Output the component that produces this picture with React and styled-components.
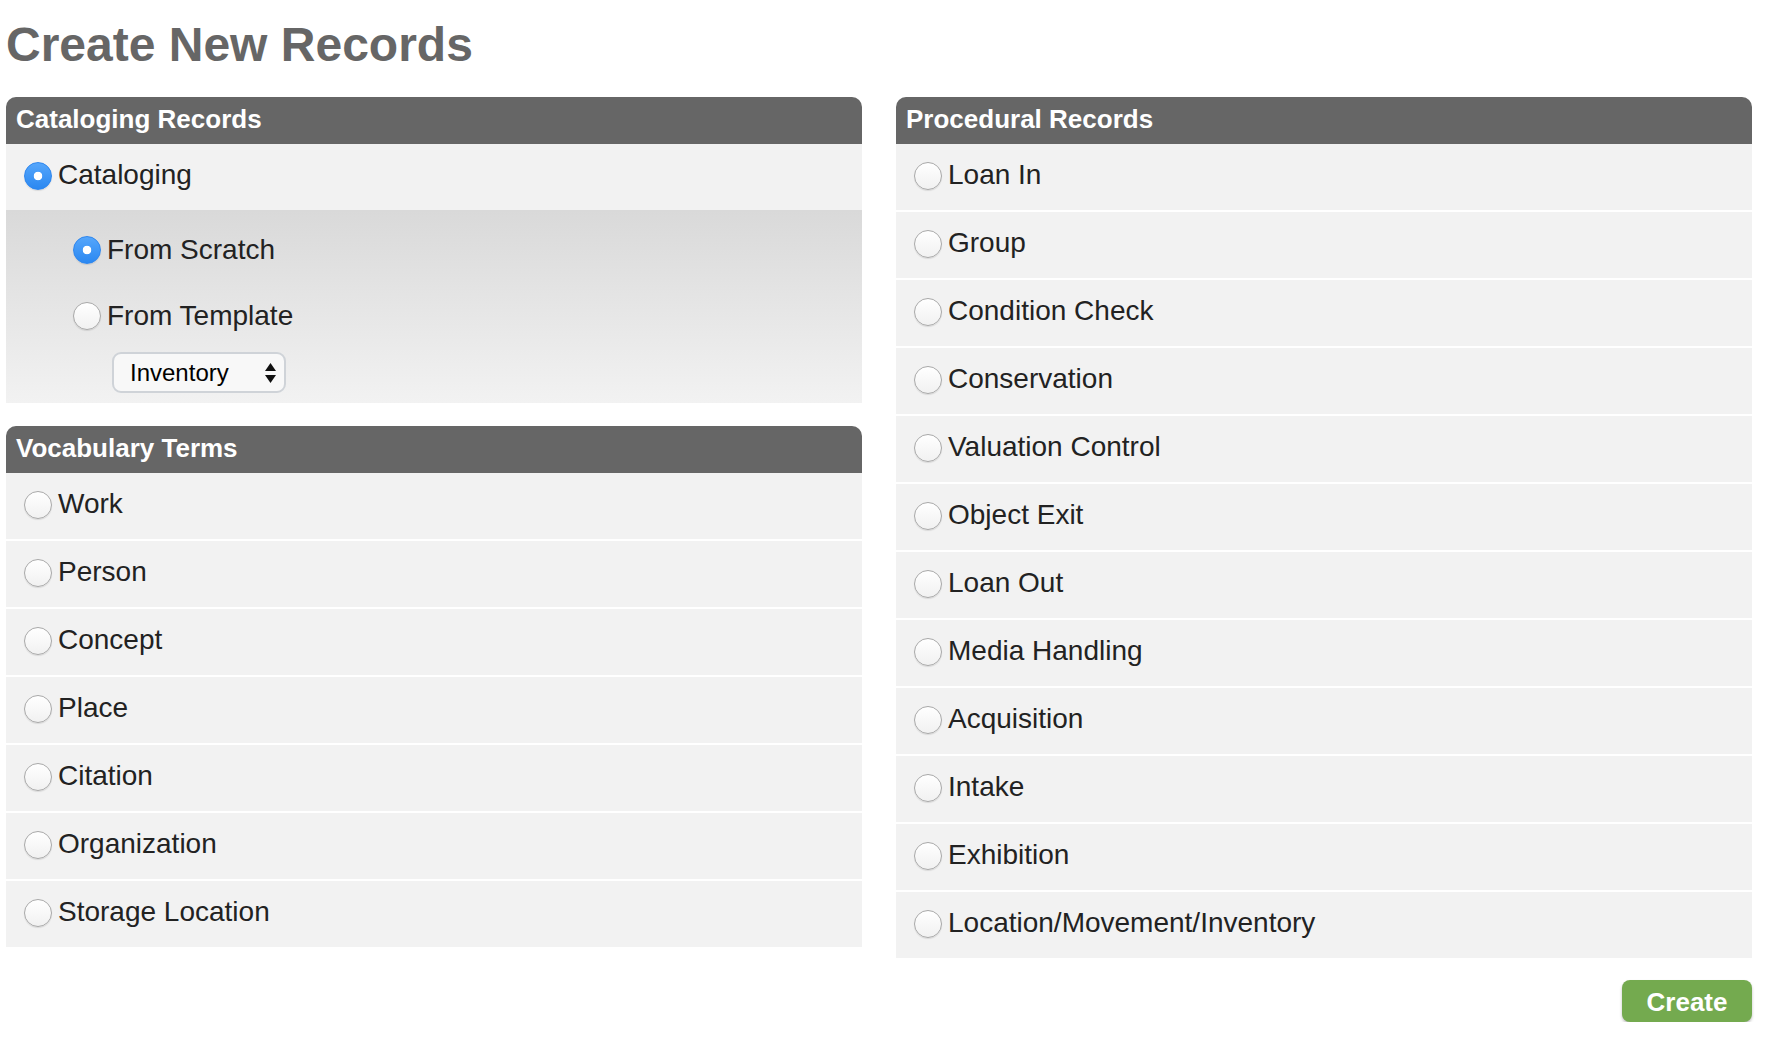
import React from 'react';
import styled, { createGlobalStyle } from 'styled-components';

const GlobalStyle = createGlobalStyle`
  body {
    margin: 0;
    background: #fff;
    font-family: "Liberation Sans", Arial, Helvetica, sans-serif;
  }
`;

const Page = styled.div`
  width: 1746px;
  padding-left: 6px;
`;

const Title = styled.h1`
  margin: 0;
  padding-top: 17px;
  font-size: 48px;
  line-height: 56px;
  font-weight: bold;
  color: #666;
`;

const Columns = styled.div`
  display: grid;
  grid-template-columns: 856px 856px;
  column-gap: 34px;
  margin-top: 24px;
  align-items: start;
`;

const Column = styled.div`
  display: flex;
  flex-direction: column;
  gap: 23px;
`;

const Panel = styled.section`
  background: #f2f2f2;
  border-radius: 10px 10px 0 0;
  overflow: hidden;
`;

const PanelHeader = styled.h2`
  margin: 0;
  height: 47px;
  padding: 0 10px;
  background: #666;
  color: #fff;
  font-size: 26px;
  line-height: 45px;
  font-weight: bold;
`;

const Row = styled.label`
  display: flex;
  align-items: center;
  height: 63px;
  padding: 0 0 3px 18px;
  font-size: 28px;
  color: #222;
  border-bottom: ${p => (p.last ? 'none' : '2px solid #fff')};
`;

const SubOptions = styled.div`
  padding: 7px 0 10px 67px;
  background: linear-gradient(#d9d9d9, #f2f2f2);
`;

const SubRow = styled.label`
  display: flex;
  align-items: center;
  height: 66px;
  font-size: 28px;
  color: #222;
`;

const Text = styled.span`
  margin-bottom: 2px;
`;

const Radio = styled.input.attrs({ type: 'radio' })`
  appearance: none;
  -webkit-appearance: none;
  flex: none;
  width: 28px;
  height: 28px;
  margin: 0 6px 0 0;
  border-radius: 50%;
  border: 1px solid #a9a9a9;
  background: linear-gradient(#ffffff, #f1f1f1);
  box-shadow: 0 1px 1px rgba(0, 0, 0, 0.1);

  &:checked {
    border-color: #2e86ee;
    background: radial-gradient(circle, #fff 0 4px, transparent 4.6px),
      linear-gradient(#55a6fb, #2b88f1);
  }
`;

const SelectWrap = styled.div`
  position: relative;
  width: 174px;
  height: 41px;
  margin: 3px 0 0 39px;
`;

const Select = styled.select`
  appearance: none;
  -webkit-appearance: none;
  width: 100%;
  height: 100%;
  padding: 0 0 0 16px;
  border: 2px solid #cfd3d8;
  border-radius: 9px;
  background: #f8f8f8;
  font-family: "Liberation Sans", Arial, sans-serif;
  font-size: 24px;
  color: #000;
`;

const Arrows = styled.svg`
  position: absolute;
  right: 10px;
  top: 11px;
  pointer-events: none;
`;

const ButtonBar = styled.div`
  display: flex;
  justify-content: flex-end;
  margin-top: 22px;
`;

const CreateButton = styled.button`
  width: 130px;
  height: 42px;
  padding: 3px 0 0;
  border: none;
  border-radius: 8px;
  background: #74aa4f;
  color: #fff;
  font-family: "Liberation Sans", Arial, sans-serif;
  font-size: 26px;
  font-weight: bold;
  box-shadow: 0 2px 3px rgba(0, 0, 0, 0.25);
  cursor: pointer;
`;

const vocabulary = [
  'Work',
  'Person',
  'Concept',
  'Place',
  'Citation',
  'Organization',
  'Storage Location'
];

const procedures = [
  'Loan In',
  'Group',
  'Condition Check',
  'Conservation',
  'Valuation Control',
  'Object Exit',
  'Loan Out',
  'Media Handling',
  'Acquisition',
  'Intake',
  'Exhibition',
  'Location/Movement/Inventory'
];

const RecordList = ({ items }) =>
  items.map((name, i) => (
    <Row key={name} last={i === items.length - 1}>
      <Radio name="recordType" value={name} />
      <Text>{name}</Text>
    </Row>
  ));

export default function App() {
  return (
    <Page>
      <GlobalStyle />
      <Title>Create New Records</Title>
      <Columns>
        <Column>
          <Panel>
            <PanelHeader>Cataloging Records</PanelHeader>
            <Row last>
              <Radio name="recordType" value="cataloging" defaultChecked />
              <Text>Cataloging</Text>
            </Row>
            <SubOptions>
              <SubRow>
                <Radio name="createMode" value="scratch" defaultChecked />
                From Scratch
              </SubRow>
              <SubRow>
                <Radio name="createMode" value="template" />
                From Template
              </SubRow>
              <SelectWrap>
                <Select defaultValue="inventory">
                  <option value="inventory">Inventory</option>
                </Select>
                <Arrows width="11" height="20" viewBox="0 0 11 20">
                  <polygon points="0,8 5.5,0 11,8" fill="#111" />
                  <polygon points="0,12 11,12 5.5,20" fill="#111" />
                </Arrows>
              </SelectWrap>
            </SubOptions>
          </Panel>
          <Panel>
            <PanelHeader>Vocabulary Terms</PanelHeader>
            <RecordList items={vocabulary} />
          </Panel>
        </Column>
        <div>
          <Panel>
            <PanelHeader>Procedural Records</PanelHeader>
            <RecordList items={procedures} />
          </Panel>
          <ButtonBar>
            <CreateButton>Create</CreateButton>
          </ButtonBar>
        </div>
      </Columns>
    </Page>
  );
}
